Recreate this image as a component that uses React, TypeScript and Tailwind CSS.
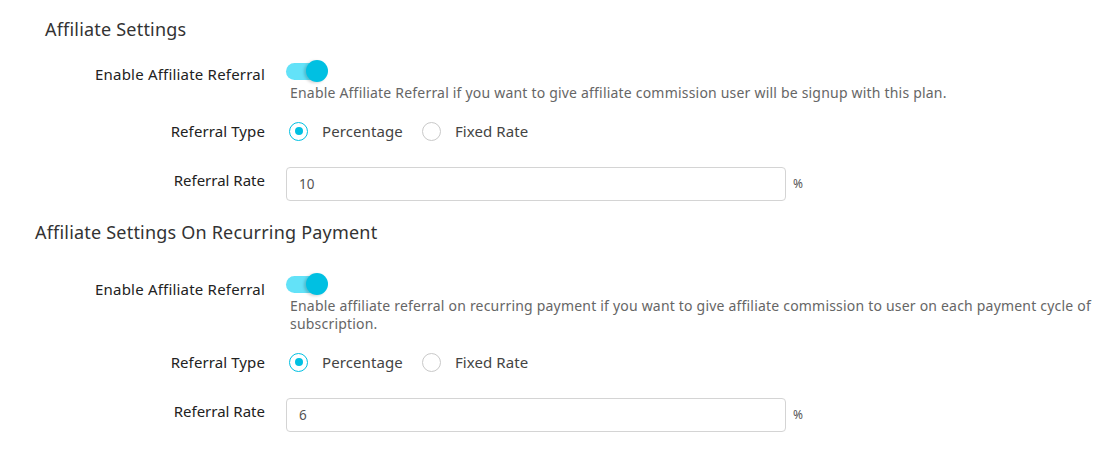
import React from 'react';

const Toggle: React.FC = () => (
  <div className="relative w-[42px] h-[22px]">
    <div className="absolute left-0 top-[3px] w-[37px] h-[17px] rounded-full bg-[#63e2f8]" />
    <div className="absolute right-0 top-0 w-[22px] h-[22px] rounded-full bg-[#00c0e2] shadow-[-2px_1px_3px_rgba(0,0,0,0.18)]" />
  </div>
);

const Radio: React.FC<{ checked?: boolean; label: string }> = ({ checked, label }) => (
  <label className="flex items-center">
    <span
      className={
        checked
          ? 'w-[19px] h-[19px] rounded-full border-[1.5px] border-[#00c0e2] flex items-center justify-center'
          : 'w-[19px] h-[19px] rounded-full border border-[#c9c9c9]'
      }
    >
      {checked && <span className="w-[8px] h-[8px] rounded-full bg-[#00c0e2]" />}
    </span>
    <span className="ml-[14px] text-[#444] text-[15px] tracking-[0.1px]">{label}</span>
  </label>
);

const Section: React.FC<{
  title: string;
  titleClass: string;
  desc: string;
  rate: string;
  toggleGap: string;
  labelPad: string;
}> = ({ title, titleClass, desc, rate, toggleGap, labelPad }) => (
  <div>
    <h2 className={`text-[18px] leading-[26px] tracking-[0.2px] text-[#333] ${titleClass}`}>{title}</h2>
    <div className={`grid grid-cols-[265px_1fr] gap-x-[21px] ${toggleGap}`}>
      <div className={`text-right text-[#222] text-[15px] tracking-[0.2px] leading-[20px] ${labelPad}`}>
        Enable Affiliate Referral
      </div>
      <div>
        <Toggle />
        <p className="mt-[2px] pl-[4px] pr-[20px] text-[#666] tracking-[0.2px] leading-[18px]">{desc}</p>
      </div>

      <div className="text-right text-[#222] text-[15px] tracking-[0.1px] mt-[19px] leading-[20px]">Referral Type</div>
      <div className="mt-[19px] flex items-center gap-[19px] pl-[3px] leading-[20px]">
        <Radio checked label="Percentage" />
        <Radio label="Fixed Rate" />
      </div>

      <div className="text-right text-[#222] text-[15px] mt-[29px] leading-[20px]">Referral Rate</div>
      <div className="mt-[26px] flex items-center">
        <div className="w-[500px] h-[34px] border border-[#d4d4d4] rounded-[4px] flex items-center px-[12px] text-[#555] text-[13.5px]">
          {rate}
        </div>
        <span className="ml-[7px] text-[12px] text-[#555]">%</span>
      </div>
    </div>
  </div>
);

const App: React.FC = () => {
  return (
    <div className="w-[1115px] h-[472px] bg-white text-[14px] font-['Noto_Sans',sans-serif] pt-[16px]">
      <Section
        title="Affiliate Settings"
        titleClass="pl-[45px]"
        desc="Enable Affiliate Referral if you want to give affiliate commission user will be signup with this plan."
        rate="10"
        toggleGap="mt-[18px]"
        labelPad="pt-[4px]"
      />
      <div className="mt-[18px]">
        <Section
          title="Affiliate Settings On Recurring Payment"
          titleClass="pl-[35px]"
          desc="Enable affiliate referral on recurring payment if you want to give affiliate commission to user on each payment cycle of subscription."
          rate="6"
          toggleGap="mt-[28px]"
          labelPad="pt-[6px]"
        />
      </div>
    </div>
  );
};

export default App;
